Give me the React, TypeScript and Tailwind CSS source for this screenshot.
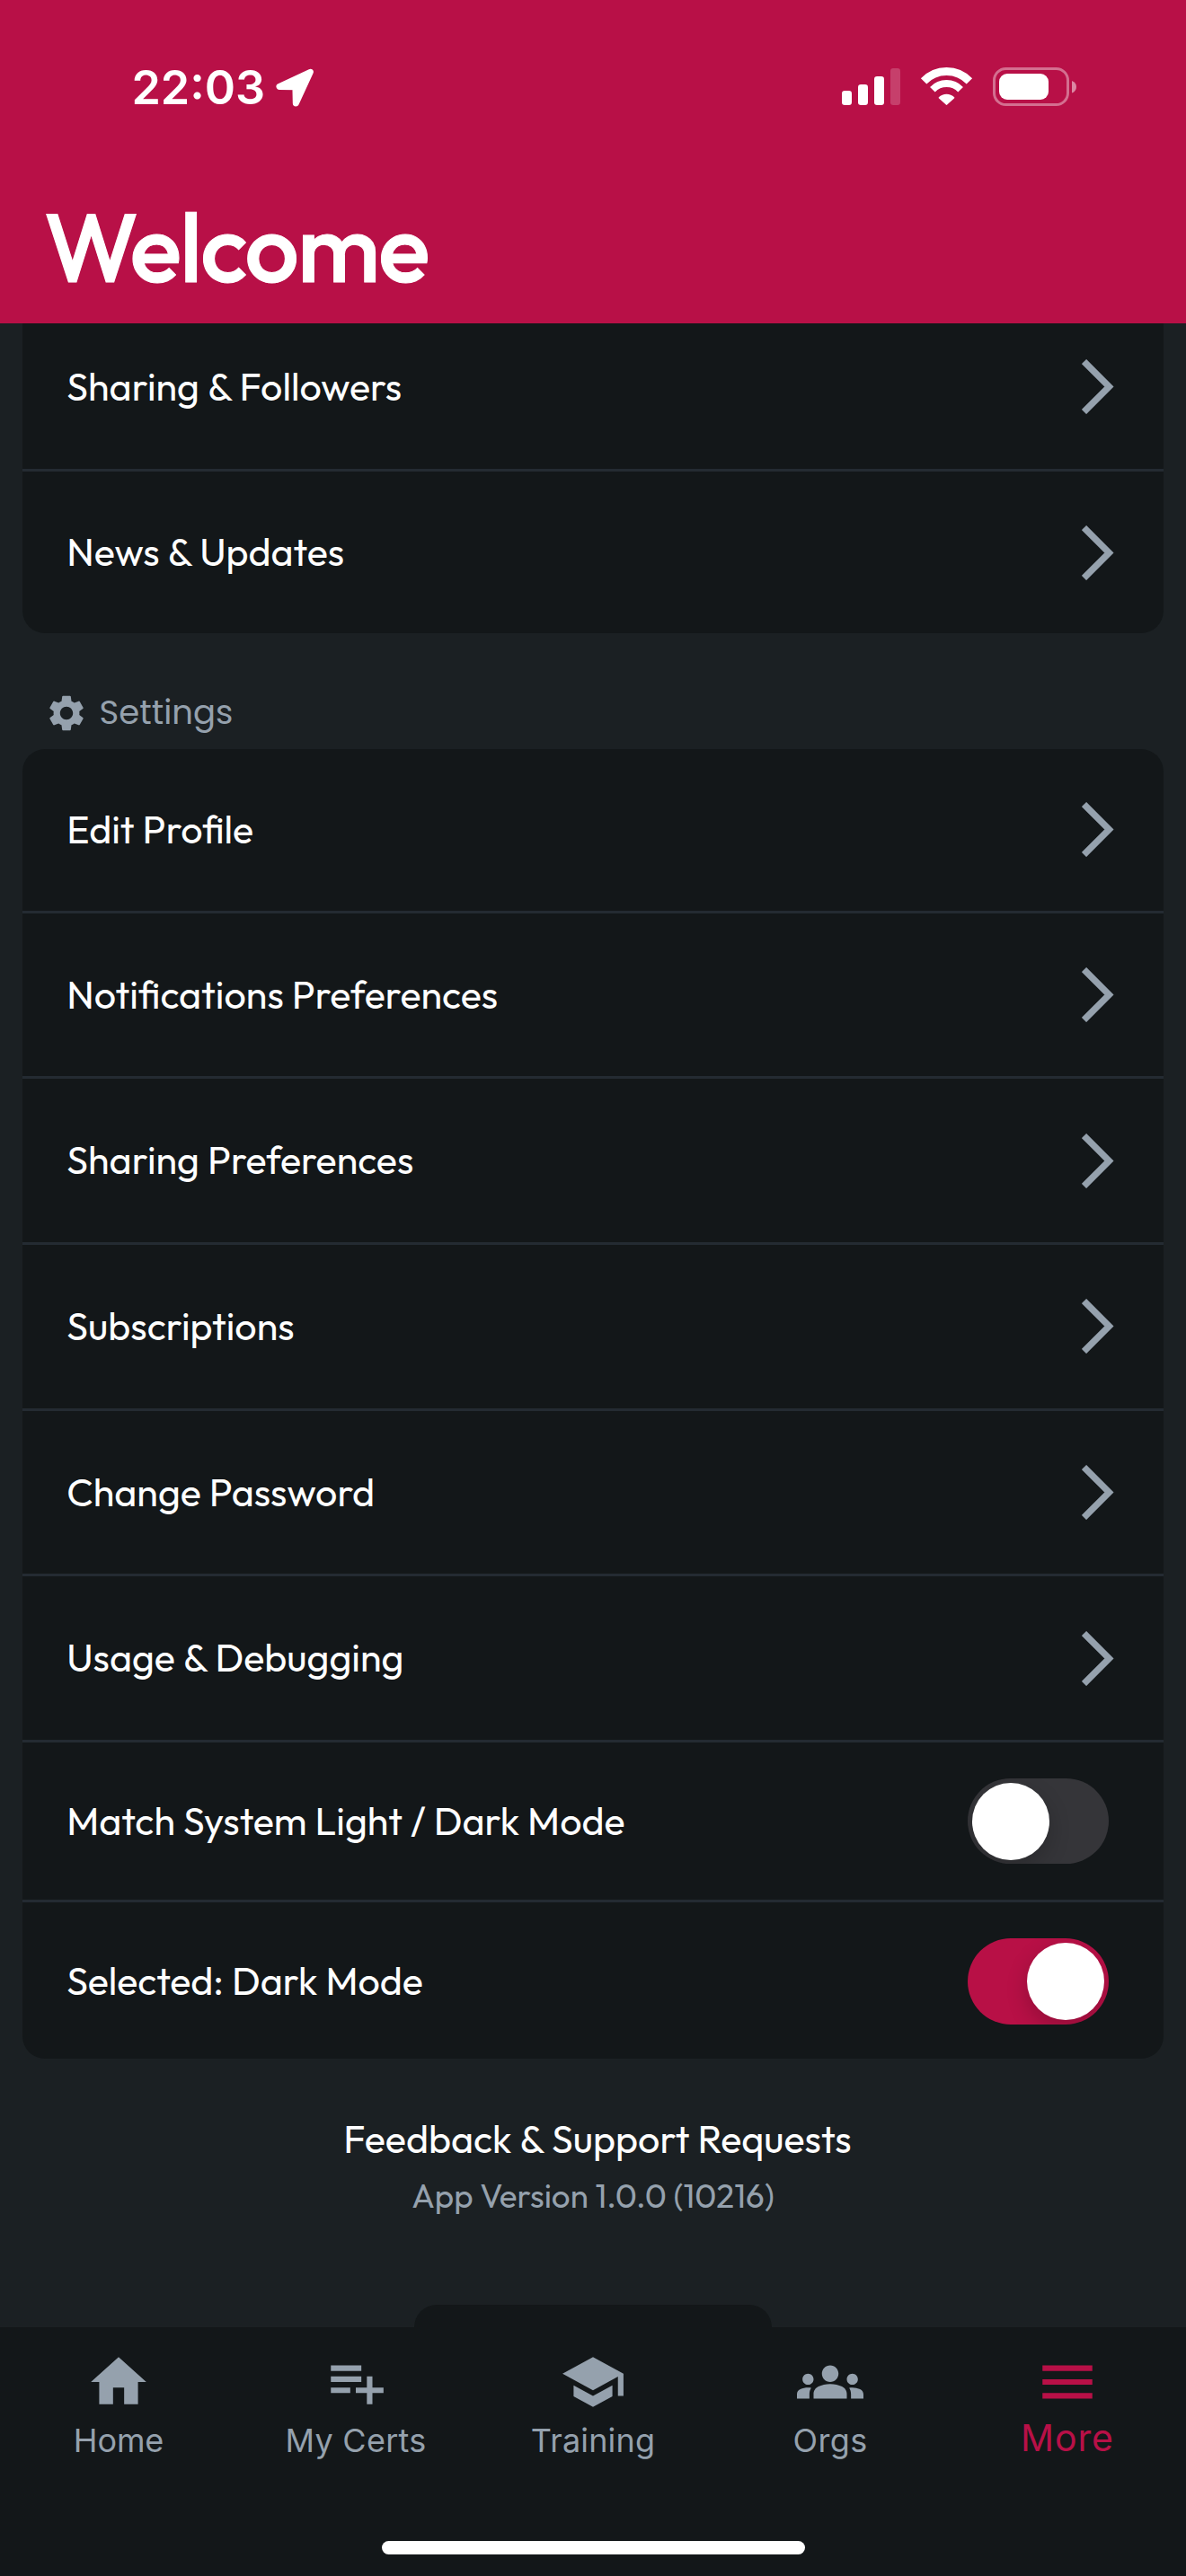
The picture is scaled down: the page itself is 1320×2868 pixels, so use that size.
import React, { ReactNode } from "react";
import { MdGroups, MdHome, MdMenu, MdPlaylistAdd, MdSchool, MdSettings } from "react-icons/md";

function StatusIcons() {
  return (
    <svg width="262" height="43" viewBox="0 0 262 43" fill="none">
      <g fill="#fff">
        <rect x="0" y="26" width="11" height="16" rx="3.2" />
        <rect x="18" y="19" width="11" height="23" rx="3.2" />
        <rect x="36" y="10" width="11" height="32" rx="3.2" />
        <rect x="54" y="1" width="11" height="41" rx="3.2" opacity="0.2" />
        <path d="M107.8 33.3A12.5 12.5 0 0 1 125.2 33.3Q125.6 34 125 34.6L117.2 41.6Q116.5 42.3 115.8 41.6L108 34.6Q107.4 34 107.8 33.3Z" />
      </g>
      <path d="M91.1 15.4A35 35 0 0 1 141.9 15.4" stroke="#fff" strokeWidth="8.8" />
      <path d="M100.9 24.7A21.5 21.5 0 0 1 132.1 24.7" stroke="#fff" strokeWidth="7.8" />
      <rect x="169.5" y="1.5" width="82" height="40" rx="13" stroke="#fff" strokeOpacity="0.4" strokeWidth="3" />
      <rect x="175" y="7" width="55" height="29" rx="9" fill="#fff" />
      <path d="M256 15Q261 17 261 21.7Q261 26.5 256 28.500Z" fill="#fff" fillOpacity="0.5" />
    </svg>
  );
}

function LocationArrow() {
  return (
    <svg width="44" height="44" viewBox="0 0 44 44">
      <path d="M39.3 4.300L5 20.500L22.900 20.800L23.300 39Z" fill="#fff" stroke="#fff" strokeWidth="7" strokeLinejoin="round" />
    </svg>
  );
}

function Chevron() {
  return (
    <svg width="36" height="61" viewBox="0 0 36 61" fill="none" className="shrink-0">
      <path d="M2.500 2.500L30.400 30.500L2.500 58.500" stroke="#95a1ad" strokeWidth="7.300" />
    </svg>
  );
}

function Toggle({ on }: { on?: boolean }) {
  return (
    <div
      className={
        on
          ? "flex h-[95.5px] w-[156.6px] items-center justify-end overflow-hidden rounded-full bg-[#b81046] p-[4.6px]"
          : "flex h-[95.5px] w-[156.6px] items-center overflow-hidden rounded-full bg-[#353539] p-[4.6px]"
      }
    >
      <div className="size-[86.3px] rounded-full bg-white shadow-[0_9px_24px_rgba(0,0,0,0.2)]" />
    </div>
  );
}

function Row({ label, size, end }: { label: string; size: string; end: ReactNode }) {
  return (
    <div className={`flex items-center justify-between pl-[49.6px] ${size}`}>
      <span className="-mt-0.5 whitespace-nowrap">{label}</span>
      {end}
    </div>
  );
}

const Divider = () => <div className="h-[3px] bg-[#242b32]" />;

const chevronRows = [
  "Notifications Preferences",
  "Sharing Preferences",
  "Subscriptions",
  "Change Password",
  "Usage & Debugging",
];

const tabs = [
  { label: "Home", Icon: MdHome, text: "tracking-[-0.1px]" },
  { label: "My Certs", Icon: MdPlaylistAdd, text: "tracking-[0.27px]" },
  { label: "Training", Icon: MdSchool, text: "tracking-[0.18px]" },
  { label: "Orgs", Icon: MdGroups, text: "tracking-[0.35px]" },
];

export default function App() {
  return (
    <div className="flex h-[2868px] w-[1320px] flex-col overflow-hidden bg-[#1b2023] font-[Outfit,Lato,sans-serif] text-[43px] leading-[54px] text-white">
      <header className="flex h-[360px] shrink-0 flex-col justify-between bg-[#b81047] pb-[18px]">
        <div className="flex items-start justify-between pl-[146.4px] pr-[121px] pt-[67px]">
          <div className="flex items-start">
            <span className="w-[160px] font-[Inter,sans-serif] text-[52px] font-[560] leading-[62px]">22:03</span>
            <div className="pt-[9px]">
              <LocationArrow />
            </div>
          </div>
          <div className="pt-2">
            <StatusIcons />
          </div>
        </div>
        <h1 className="pl-[49px] text-[107px] font-medium leading-[135px] tracking-[-1.79px] [-webkit-text-stroke:1px_white]">Welcome</h1>
      </header>

      <main className="min-h-0 flex-1 overflow-hidden">
        <section className="mx-[24.6px] -mt-5 rounded-b-[25px] bg-[#131719]">
          <Row label="Sharing & Followers" size="h-[181.6px] pr-[55.8px]" end={<Chevron />} />
          <Divider />
          <Row label="News & Updates" size="h-[180.2px] pr-[55.8px] pt-[1.5px]" end={<Chevron />} />
        </section>

        <div className="flex h-[129px] items-end pb-4 pl-[49.6px] text-[#95a1ad]">
          <MdSettings className="size-12" />
          <h2 className="-mb-px pl-[13px] font-[Poppins,Inter,sans-serif] text-[37px] leading-[52px]">Settings</h2>
        </div>

        <section className="mx-[24.6px] rounded-[25px] bg-[#131719]">
          <Row label="Edit Profile" size="h-[180px] pr-[55.8px]" end={<Chevron />} />
          <Divider />
          {chevronRows.map((label) => (
            <React.Fragment key={label}>
              <Row label={label} size="h-[181.67px] pr-[55.8px]" end={<Chevron />} />
              <Divider />
            </React.Fragment>
          ))}
          <Row label="Match System Light / Dark Mode" size="h-[175.2px] pr-[61.5px]" end={<Toggle />} />
          <Divider />
          <Row label="Selected: Dark Mode" size="h-[174px] pr-[61.5px] pt-px" end={<Toggle on />} />
        </section>

        <div className="flex flex-col items-center pt-[61.7px]">
          <p className="pl-[10px]">Feedback &amp; Support Requests</p>
          <p className="mt-[14px] text-[36.75px] leading-[46px] text-[#95a1ad]">App Version 1.0.0 (10216)</p>
        </div>
      </main>

      <nav className="relative h-[277px] shrink-0 bg-[#131719] font-[Inter,sans-serif]">
        <div className="absolute -top-[25px] left-[461px] h-[26px] w-[398px] rounded-t-[25px] bg-[#131719]" />
        <div className="grid h-[238px] grid-cols-5 pt-[23.5px]">
          {tabs.map(({ label, Icon, text }) => (
            <div key={label} className="flex flex-col items-center text-[#95a1ad]">
              <Icon className="size-[74px]" />
              <span className={`mt-1.5 text-[36px] leading-[44px] ${text}`}>{label}</span>
            </div>
          ))}
          <div className="flex flex-col items-center text-[#b81047]">
            <MdMenu className="size-[74px]" />
            <span className="text-[41px] leading-[50px] tracking-[0.9px]">More</span>
          </div>
        </div>
        <div className="mx-auto h-[15px] w-[471px] rounded-full bg-white" />
      </nav>
    </div>
  );
}
